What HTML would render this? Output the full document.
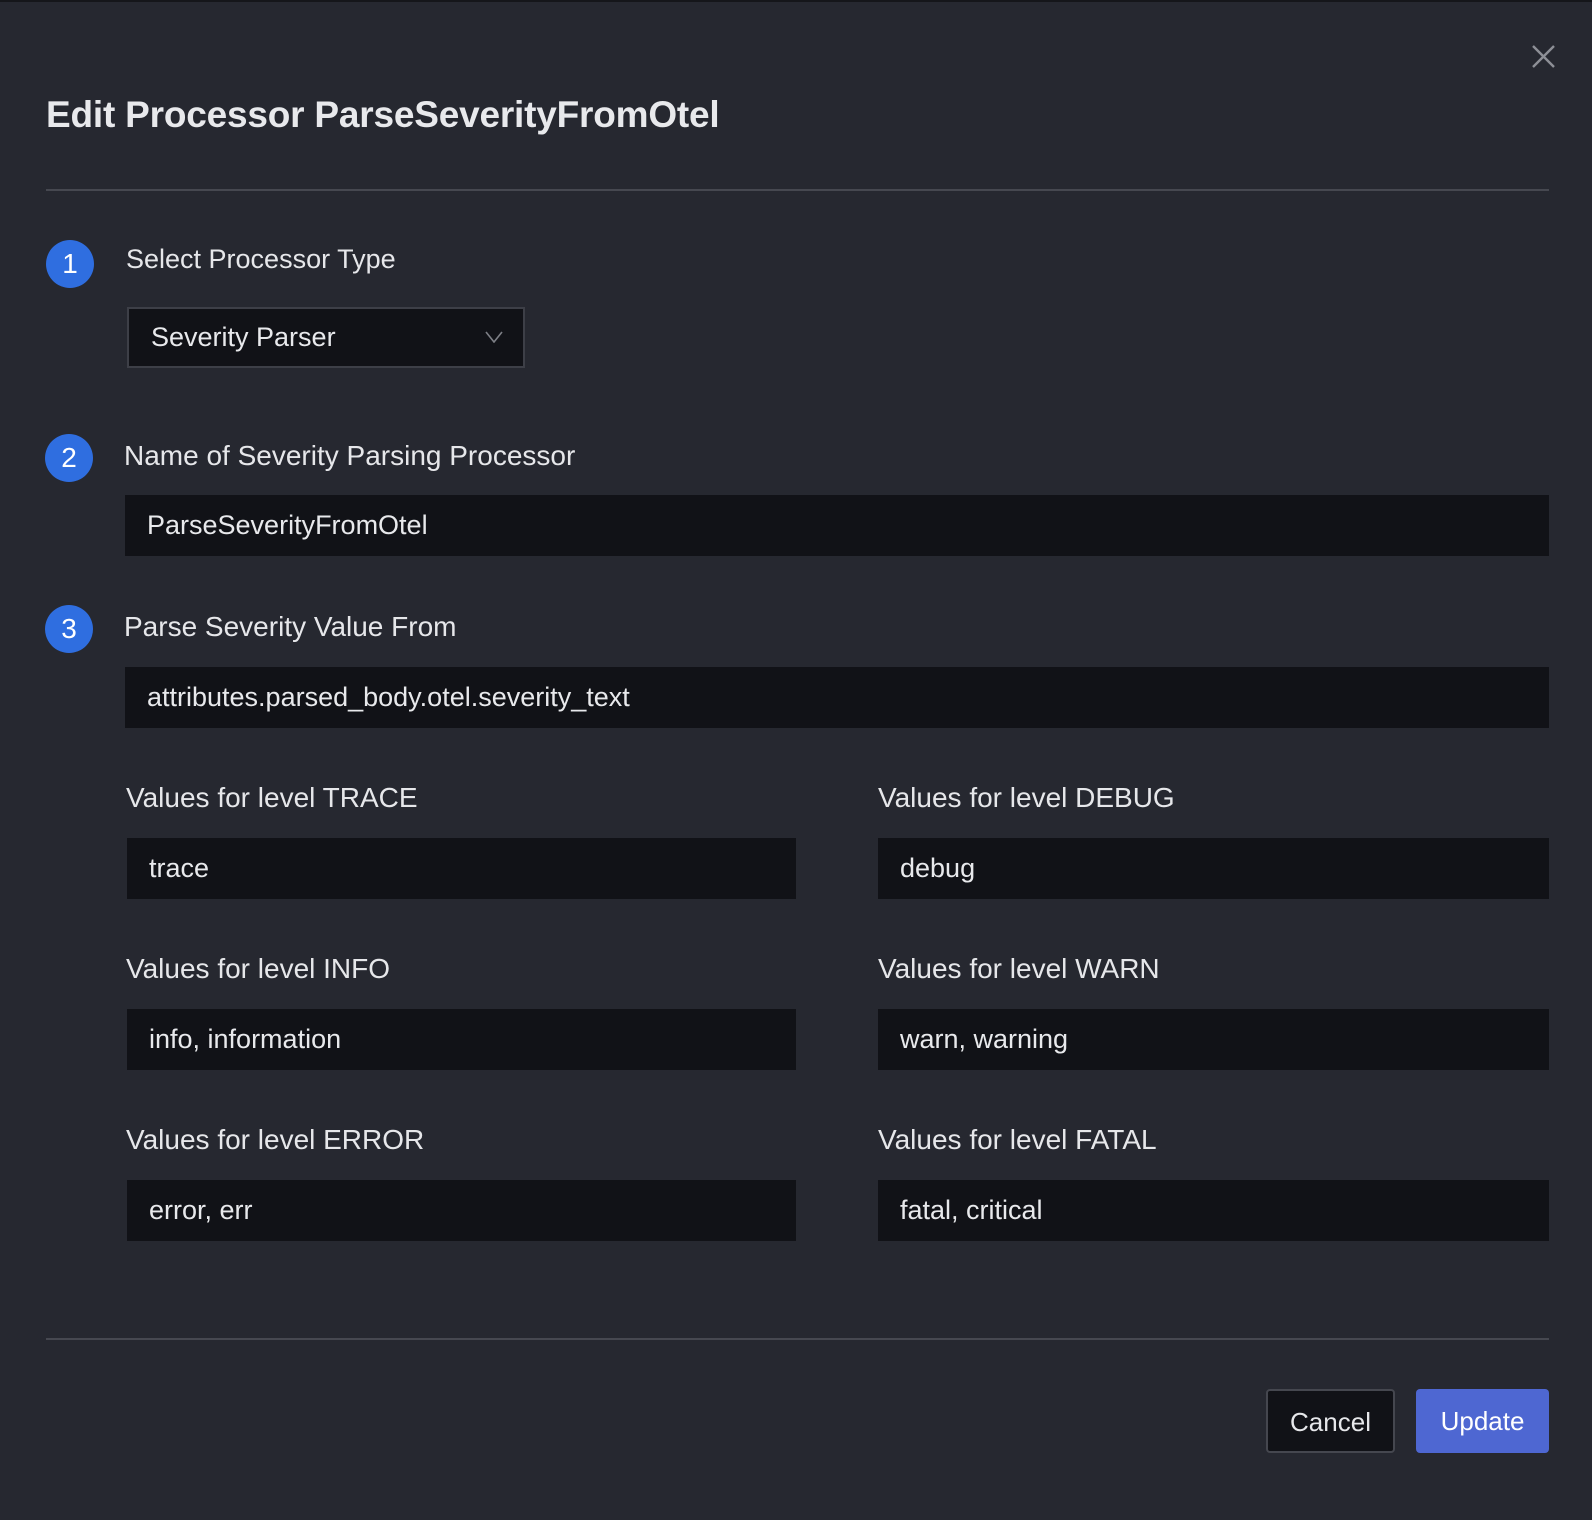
<!DOCTYPE html>
<html><head><meta charset="utf-8"><style>
*{box-sizing:border-box;margin:0;padding:0}
body{width:1592px;height:1520px;background:#262830;font-family:"Liberation Sans",sans-serif;color:#e6e7ea;position:relative;overflow:hidden;border-top:2px solid #15161a}
.a{position:absolute}
.t{font-size:37px;font-weight:bold;left:46px;top:92px;color:#e8e9ec;letter-spacing:-0.2px}
.hr{left:46px;width:1503px;height:2px;background:#464850}
.c{width:48px;height:48px;border-radius:50%;background:#2f6ee0;color:#fff;font-size:28px;text-align:center;line-height:48px}
.l{font-size:28px;color:#e6e7ea}
.in{background:#111217;font-size:27px;line-height:61px;padding-left:22px;color:#e8e9ec;height:61px}
.btn{height:64px;border-radius:4px;font-size:26px;text-align:center;line-height:62px}
</style></head><body>
<svg class="a" style="left:1532px;top:43px" width="23" height="23" viewBox="0 0 23 23"><path d="M1 1L22 22M22 1L1 22" stroke="#8d8f96" stroke-width="2.4"/></svg>
<div class="a t">Edit Processor ParseSeverityFromOtel</div>
<div class="a hr" style="top:187px"></div>

<div class="a c" style="left:46px;top:238px">1</div>
<div class="a l" style="left:126px;top:242px;font-size:27px">Select Processor Type</div>
<div class="a in" style="left:127px;top:305px;width:398px;border:2px solid #3d3f47;line-height:57px;">Severity Parser</div>
<svg class="a" style="left:485px;top:329px" width="18" height="12" viewBox="0 0 18 12"><path d="M1 1L9 11L17 1" fill="none" stroke="#7d7f86" stroke-width="1.6"/></svg>

<div class="a c" style="left:45px;top:432px">2</div>
<div class="a l" style="left:124px;top:438px">Name of Severity Parsing Processor</div>
<div class="a in" style="left:125px;top:493px;width:1424px">ParseSeverityFromOtel</div>

<div class="a c" style="left:45px;top:603px">3</div>
<div class="a l" style="left:124px;top:609px">Parse Severity Value From</div>
<div class="a in" style="left:125px;top:665px;width:1424px">attributes.parsed_body.otel.severity_text</div>

<div class="a l" style="left:126px;top:780px">Values for level TRACE</div>
<div class="a in" style="left:127px;top:836px;width:669px">trace</div>
<div class="a l" style="left:878px;top:780px">Values for level DEBUG</div>
<div class="a in" style="left:878px;top:836px;width:671px">debug</div>

<div class="a l" style="left:126px;top:951px">Values for level INFO</div>
<div class="a in" style="left:127px;top:1007px;width:669px">info, information</div>
<div class="a l" style="left:878px;top:951px">Values for level WARN</div>
<div class="a in" style="left:878px;top:1007px;width:671px">warn, warning</div>

<div class="a l" style="left:126px;top:1122px">Values for level ERROR</div>
<div class="a in" style="left:127px;top:1178px;width:669px">error, err</div>
<div class="a l" style="left:878px;top:1122px">Values for level FATAL</div>
<div class="a in" style="left:878px;top:1178px;width:671px">fatal, critical</div>

<div class="a hr" style="top:1336px"></div>
<div class="a btn" style="left:1266px;top:1387px;width:129px;background:#111217;border:2px solid #45474f;color:#e6e7ea">Cancel</div>
<div class="a btn" style="left:1416px;top:1387px;width:133px;background:#4e67d2;color:#fff;line-height:64px">Update</div>
</body></html>
